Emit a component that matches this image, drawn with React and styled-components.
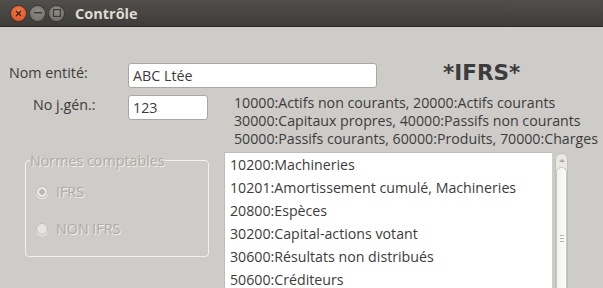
import React from "react";
import styled, { createGlobalStyle } from "styled-components";

const Global = createGlobalStyle`
  html, body {
    margin: 0;
    padding: 0;
    width: 603px;
    height: 288px;
    overflow: hidden;
    background: #cdccc8;
  }
  body {
    font-family: "Open Sans", "Noto Sans", sans-serif;
    font-size: 14.3px;
    color: #3c3c3c;
  }
`;

const Window = styled.div`
  width: 603px;
  height: 288px;
  display: flex;
  flex-direction: column;
  overflow: hidden;
  background: #cdccc8;
`;

const TitleBar = styled.div`
  height: 26px;
  flex: none;
  display: flex;
  align-items: center;
  padding-left: 11px;
  gap: 4px;
  background: linear-gradient(#504f4b, #3d3c38);
  border-bottom: 1px solid #2c2b28;
`;

const WinButton = styled.div`
  width: 15px;
  height: 15px;
  border-radius: 50%;
  display: flex;
  align-items: center;
  justify-content: center;
  background: ${(p) =>
    p.$close
      ? "radial-gradient(circle at 50% 35%, #f27d4a, #df4a16)"
      : "radial-gradient(circle at 50% 35%, #8c8b86, #6c6b67)"};
  box-shadow: 0 0 0 1px #3a3935;
`;

const Title = styled.div`
  margin-left: 7px;
  font-family: "Open Sans", "Noto Sans", sans-serif;
  font-weight: 700;
  font-size: 14.5px;
  color: #dfdbd2;
`;

const Content = styled.div`
  flex: 1;
  display: flex;
  flex-direction: column;
  padding-top: 36px;
`;

const Row = styled.div`
  display: flex;
  align-items: ${(p) => p.$align || "center"};
  margin-top: ${(p) => p.$mt || 0}px;
`;

const Label = styled.div`
  width: 128px;
  box-sizing: border-box;
  padding-left: ${(p) => p.$indent}px;
  margin-top: ${(p) => p.$mt || 0}px;
  font-size: 14.3px;
  color: #3c3c3c;
`;

const TextInput = styled.input`
  box-sizing: border-box;
  width: ${(p) => p.$w}px;
  height: 25px;
  border: 1px solid #a9a7a1;
  border-radius: 3px;
  background: #fff;
  padding: 0 4px;
  font-family: "Open Sans", "Noto Sans", sans-serif;
  font-size: 14.3px;
  color: #3c3c3c;
  outline: none;
`;

const Badge = styled.div`
  margin-left: 66px;
  margin-top: -6px;
  font-family: "DejaVu Sans", sans-serif;
  font-weight: 700;
  font-size: 21.5px;
  color: #3c3c3c;
`;

const Legend = styled.div`
  margin-left: 26px;
  display: flex;
  flex-direction: column;
  margin-top: -1px;
  font-size: 14.2px;
  line-height: 18px;
  white-space: nowrap;
`;

const Bottom = styled.div`
  display: flex;
  align-items: flex-start;
  margin-top: 4px;
`;

const Group = styled.fieldset`
  box-sizing: border-box;
  margin: -1px 0 0 25px;
  width: 184px;
  height: 106px;
  padding: 0 0 0 10px;
  border: 1px solid #f2f1ee;
  border-radius: 4px;
  display: flex;
  flex-direction: column;
  gap: 18px;
`;

const GroupTitle = styled.legend`
  padding: 0;
  margin-left: -6px;
  font-size: 14.3px;
  color: #aeaba5;
  text-shadow: 1px 1px 0 #f0efec;
`;

const Option = styled.div`
  display: flex;
  align-items: center;
  gap: 8px;
  margin-top: ${(p) => p.$mt || 0}px;
  font-size: 14.3px;
  color: #aeaba5;
  text-shadow: 1px 1px 0 #f0efec;
`;

const RadioDot = styled.span`
  width: 12px;
  height: 12px;
  border-radius: 50%;
  box-sizing: border-box;
  border: 1px solid #c3c1bc;
  background: radial-gradient(circle, ${(p) => (p.$on ? "#b9b7b2 0 2.5px, #e9e8e5 3px" : "#e6e4e1 0, #e6e4e1 100%")});
  box-shadow: 0 1px 0 #f3f2ef;
`;

const ListWrap = styled.div`
  margin-left: 15px;
  display: flex;
  align-items: flex-start;
  gap: 3px;
`;

const List = styled.ul`
  list-style: none;
  margin: 0;
  padding: 0;
  width: 328px;
  height: 140px;
  box-sizing: border-box;
  background: #fff;
  border-left: 1px solid #bebcb7;
  border-top: 1px solid #bebcb7;
  overflow: hidden;
`;

const Item = styled.li`
  height: 23px;
  line-height: 23px;
  padding-left: 5px;
  font-size: 14.2px;
  color: #3c3c3c;
  white-space: nowrap;
`;

const Scroll = styled.div`
  margin-top: 1px;
  width: 13px;
  height: 140px;
  box-sizing: border-box;
  border: 1px solid #c0beb9;
  border-radius: 6px 6px 0 0;
  background: #e9e8e5;
  display: flex;
  flex-direction: column;
  align-items: center;
`;

const Arrow = styled.div`
  width: 0;
  height: 0;
  margin-top: 5px;
  border-left: 3px solid transparent;
  border-right: 3px solid transparent;
  border-bottom: 3px solid #a8a6a1;
`;

const Thumb = styled.div`
  margin-top: 5px;
  flex: 1;
  width: 11px;
  box-sizing: border-box;
  border: 1px solid #c8c6c1;
  border-bottom: none;
  border-radius: 6px 6px 0 0;
  background: linear-gradient(90deg, #f4f3f1, #fbfbfa);
  display: flex;
  flex-direction: column;
  align-items: center;
  padding-top: 67px;
  gap: 2px;
`;

const Grip = styled.span`
  width: 4px;
  height: 1px;
  background: #b5b3ae;
`;

const accounts = [
  "10200:Machineries",
  "10201:Amortissement cumulé, Machineries",
  "20800:Espèces",
  "30200:Capital-actions votant",
  "30600:Résultats non distribués",
  "50600:Créditeurs",
];

export default function App() {
  return (
    <Window>
      <Global />
      <TitleBar>
        <WinButton $close>
          <svg width="7" height="7" viewBox="0 0 7 7">
            <path d="M1 1L6 6M6 1L1 6" stroke="#3b2015" strokeWidth="1.2" />
          </svg>
        </WinButton>
        <WinButton>
          <svg width="8" height="2" viewBox="0 0 8 2">
            <rect width="8" height="1.4" fill="#3a3935" />
          </svg>
        </WinButton>
        <WinButton>
          <svg width="8" height="8" viewBox="0 0 8 8">
            <rect x="0.6" y="0.6" width="6.8" height="6.8" fill="none" stroke="#3a3935" strokeWidth="1.1" />
          </svg>
        </WinButton>
        <Title>Contrôle</Title>
      </TitleBar>
      <Content>
        <Row>
          <Label $indent={9} $mt={-7}>Nom entité:</Label>
          <TextInput $w={249} defaultValue="ABC Ltée" />
          <Badge>*IFRS*</Badge>
        </Row>
        <Row $align="flex-start" $mt={7}>
          <Label $indent={33}>No j.gén.:</Label>
          <TextInput $w={80} defaultValue="123" />
          <Legend>
            <span>10000:Actifs non courants, 20000:Actifs courants</span>
            <span>30000:Capitaux propres, 40000:Passifs non courants</span>
            <span>50000:Passifs courants, 60000:Produits, 70000:Charges</span>
          </Legend>
        </Row>
        <Bottom>
          <Group disabled>
            <GroupTitle>Normes comptables</GroupTitle>
            <Option $mt={12}>
              <RadioDot $on />
              IFRS
            </Option>
            <Option>
              <RadioDot />
              NON IFRS
            </Option>
          </Group>
          <ListWrap>
            <List>
              {accounts.map((a) => (
                <Item key={a}>{a}</Item>
              ))}
            </List>
            <Scroll>
              <Arrow />
              <Thumb>
                <Grip />
                <Grip />
                <Grip />
              </Thumb>
            </Scroll>
          </ListWrap>
        </Bottom>
      </Content>
    </Window>
  );
}
